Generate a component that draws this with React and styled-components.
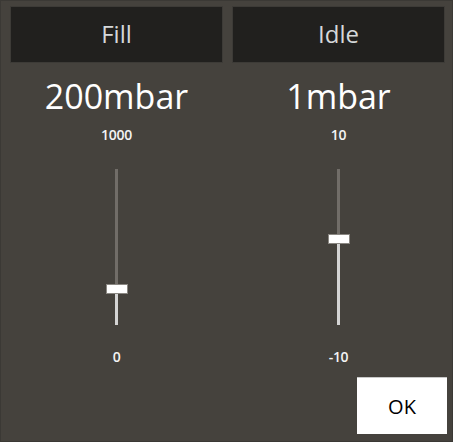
import React from 'react';
import styled, { createGlobalStyle } from 'styled-components';

const Global = createGlobalStyle`
    html, body {
        margin: 0;
        padding: 0;
        background: #45423d;
    }
    * {
        box-sizing: border-box;
    }
`

const Window = styled.div`
    width: 453px;
    height: 442px;
    background: #45423d;
    border: 1px solid #3b3935;
    padding: 5px 7px 0 9px;
    display: flex;
    flex-direction: column;
    font-family: "Open Sans", "Noto Sans", sans-serif;
`

const Columns = styled.div`
    display: grid;
    grid-template-columns: 213px 213px;
    column-gap: 9px;
`

const Column = styled.div`
    display: flex;
    flex-direction: column;
    align-items: center;
`

const ModeButton = styled.div`
    width: 100%;
    height: 57px;
    background: #21201e;
    border: 1px solid #3d3b37;
    color: #d6d8da;
    font-size: 24px;
    display: flex;
    align-items: center;
    justify-content: center;
    padding-bottom: 2px;
`

const Value = styled.div`
    margin-top: 13px;
    height: 40px;
    line-height: 40px;
    font-size: 34px;
    color: #ffffff;
`

const ScaleLabel = styled.div`
    height: 20px;
    line-height: 20px;
    font-size: 14px;
    font-weight: 600;
    letter-spacing: -0.3px;
    color: #f4f4f4;
    margin-top: ${p => p.$top}px;
`

const Slider = styled.div`
    position: relative;
    margin-top: 24px;
    width: 24px;
    height: 156px;
    display: flex;
    justify-content: center;
`

const Track = styled.div`
    width: 3px;
    height: 100%;
    display: flex;
    flex-direction: column;
`

const TrackPart = styled.div`
    background: ${p => p.$active ? '#d4d4d4' : '#716d68'};
    flex: ${p => p.$grow};
`

const Thumb = styled.div`
    position: absolute;
    left: 1px;
    width: 22px;
    height: 10px;
    margin-top: -5px;
    background: #ffffff;
    border: 1px solid #8a8782;
`

const Footer = styled.div`
    display: flex;
    justify-content: flex-end;
    margin-top: 10px;
`

const OkButton = styled.div`
    width: 90px;
    height: 57px;
    background: #ffffff;
    border-top: 1px solid #c9c9c9;
    color: #000000;
    font-size: 20px;
    display: flex;
    align-items: center;
    justify-content: center;
    margin-right: -2px;
`

const channels = [
    { name: 'Fill', value: '200mbar', max: '1000', min: '0', pos: 77 },
    { name: 'Idle', value: '1mbar', max: '10', min: '-10', pos: 45 },
]

const App = () => {
    return (
        <Window>
            <Global />
            <Columns>
                {channels.map(c => (
                    <Column key={c.name}>
                        <ModeButton>{c.name}</ModeButton>
                        <Value>{c.value}</Value>
                        <ScaleLabel $top={9}>{c.max}</ScaleLabel>
                        <Slider>
                            <Track>
                                <TrackPart $grow={c.pos} />
                                <TrackPart $grow={100 - c.pos} $active />
                            </Track>
                            <Thumb style={{ top: c.pos + '%' }} />
                        </Slider>
                        <ScaleLabel $top={22}>{c.min}</ScaleLabel>
                    </Column>
                ))}
            </Columns>
            <Footer>
                <OkButton>OK</OkButton>
            </Footer>
        </Window>
    )
}

export default App;
